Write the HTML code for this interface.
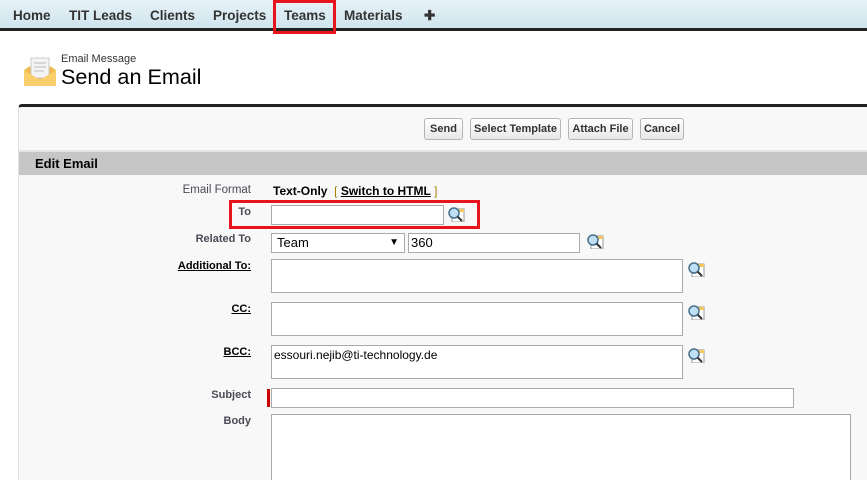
<!DOCTYPE html>
<html><head><meta charset="utf-8"><style>
*{box-sizing:border-box;margin:0;padding:0}
html,body{width:867px;height:480px;overflow:hidden}
body{background:#fff;font-family:"Liberation Sans",Arial,sans-serif;position:relative}
.a{position:absolute}
.nav{left:0;top:0;width:867px;height:31px;background:linear-gradient(#e8f3f7,#cfe4ee);border-bottom:3px solid #222}
.nav span{position:absolute;top:8px;font-size:13.5px;font-weight:bold;color:#333}
.btn{position:absolute;top:118px;height:22px;border:1px solid #b5b5b5;border-radius:3px;background:linear-gradient(#fff,#e8e8e8);font-size:11px;font-weight:bold;color:#333;text-align:center;line-height:20px}
.lbl{position:absolute;right:616px;font-size:11px;font-weight:bold;color:#4a4a56}
.lbl.u{color:#000;text-decoration:underline}
.in{position:absolute;border:1px solid #aaa;background:#fff}
.lk{position:absolute;width:18px;height:16px}
</style></head><body>
<div class="a nav">
<span style="left:13px">Home</span><span style="left:69px">TIT Leads</span><span style="left:150px">Clients</span><span style="left:213px">Projects</span><span style="left:284px">Teams</span><span style="left:344px">Materials</span><span style="left:424px">✚</span>
</div>
<div class="a" style="left:273px;top:0;width:63px;height:34px;border:3px solid #e8141c"></div>
<svg class="a" style="left:22px;top:54px" width="36" height="36" viewBox="0 0 36 36">
<path d="M2 16 L18 6 L34 16 L34 32 L2 32 Z" fill="#f0b84a"/>
<rect x="9" y="4" width="18" height="20" fill="#f4f4f4" stroke="#ccc"/>
<path d="M12 9h12M12 13h12M12 17h10" stroke="#bbb"/>
<path d="M2 16 L18 26 L34 16 L34 32 L2 32 Z" fill="#f8cf6a"/>
</svg>
<div class="a" style="left:61px;top:53px;font-size:11px;color:#333">Email Message</div>
<div class="a" style="left:61px;top:64px;font-size:21.6px;color:#000">Send an Email</div>
<div class="a" style="left:18px;top:104px;width:849px;height:376px;background:#f8f8f8;border-top:3px solid #222;border-left:1px solid #e0e0e0;border-top-left-radius:4px"></div>
<div class="btn" style="left:424px;width:39px">Send</div>
<div class="btn" style="left:470px;width:91px">Select Template</div>
<div class="btn" style="left:568px;width:65px">Attach File</div>
<div class="btn" style="left:640px;width:44px">Cancel</div>
<div class="a" style="left:19px;top:150px;width:848px;height:2px;background:#e4e4e4"></div>
<div class="a" style="left:19px;top:152px;width:848px;height:23px;background:#c6c6c6"></div>
<div class="a" style="left:35px;top:156px;font-size:13px;font-weight:bold;color:#000">Edit Email</div>
<div class="lbl" style="top:184px;font-weight:normal;font-size:11.5px">Email Format</div>
<div class="a" style="left:273px;top:184px;font-size:12px;font-weight:bold;color:#000">Text-Only <span style="color:#a08000;font-weight:normal">&nbsp;[ </span><u>Switch to HTML</u><span style="color:#a08000;font-weight:normal"> ]</span></div>
<div class="lbl" style="top:206px">To</div>
<div class="in" style="left:271px;top:205px;width:173px;height:20px"></div>
<div class="a" style="left:229px;top:200px;width:251px;height:29px;border:3px solid #e8141c"></div>
<div class="lbl" style="top:233px">Related To</div>
<div class="in" style="left:271px;top:233px;width:134px;height:20px;font-size:13px;padding:1px 5px">Team<span style="position:absolute;right:5px;top:3px;font-size:10px">▼</span></div>
<div class="in" style="left:408px;top:233px;width:172px;height:20px;font-size:13px;padding:1px 2px">360</div>
<div class="lbl u" style="top:260px">Additional To:</div>
<div class="in" style="left:271px;top:259px;width:412px;height:34px"></div>
<div class="lbl u" style="top:303px">CC:</div>
<div class="in" style="left:271px;top:302px;width:412px;height:34px"></div>
<div class="lbl u" style="top:346px">BCC:</div>
<div class="in" style="left:271px;top:345px;width:412px;height:34px;font-size:12px;padding:2px 2px">essouri.nejib@ti-technology.de</div>
<div class="lbl" style="top:389px">Subject</div>
<div class="a" style="left:267px;top:389px;width:3px;height:18px;background:#c00"></div>
<div class="in" style="left:271px;top:388px;width:523px;height:20px"></div>
<div class="lbl" style="top:415px">Body</div>
<div class="in" style="left:271px;top:414px;width:580px;height:66px;border-bottom:none"></div>
<svg width="0" height="0" style="position:absolute"><defs><g id="m"><rect x="5" y="3" width="12" height="13" fill="#fff" stroke="#999"/><rect x="12" y="3" width="5" height="3" fill="#f4c860"/><circle cx="7" cy="7" r="5" fill="#bfe0f4" stroke="#4a6f8a" stroke-width="1.5"/><path d="M10.5 10.5L15 15" stroke="#333" stroke-width="2"/></g></defs></svg>
<svg class="lk" style="left:447px;top:206px"><use href="#m"/></svg>
<svg class="lk" style="left:586px;top:233px"><use href="#m"/></svg>
<svg class="lk" style="left:687px;top:261px"><use href="#m"/></svg>
<svg class="lk" style="left:687px;top:304px"><use href="#m"/></svg>
<svg class="lk" style="left:687px;top:347px"><use href="#m"/></svg>
</body></html>
